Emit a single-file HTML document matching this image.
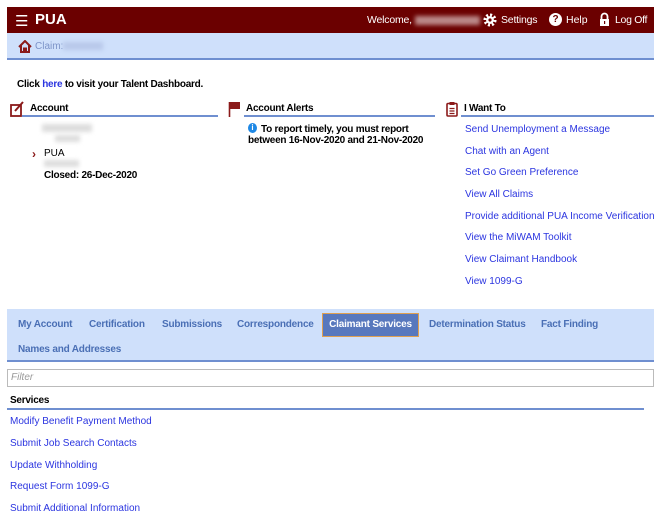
<!DOCTYPE html><html><head><style>
*{margin:0;padding:0;box-sizing:border-box}
body{width:662px;height:519px;background:#fff;font-family:"Liberation Sans",Arial,sans-serif;font-size:10px;color:#000;position:relative;overflow:hidden}
.a{position:absolute;white-space:nowrap}
.lk{color:#2b35e0}
.hdr{left:7px;top:7px;width:647px;height:26px;background:#6b0000;color:#fff}
.bc{left:7px;top:33px;width:647px;height:27px;background:#cfe0fb;border-bottom:2px solid #6f8fd0}
.h,b{font-weight:bold;letter-spacing:-0.25px}
.ul{height:2px;background:#6f8fd0}
.blur{background:#ddd;filter:blur(2px)}
.tabs{left:7px;top:309px;width:647px;height:53px;background:#cfe0fb;border-bottom:2px solid #6f8fd0}
.tab{color:#4a6fb5;font-weight:bold;letter-spacing:-0.2px}
</style></head><body>
<div class="a hdr">
 <div class="a" style="left:8px;top:5px;font-size:15px">&#9776;</div>
 <div class="a" style="left:28px;top:4px;font-size:15px;font-weight:bold">PUA</div>
 <div class="a" style="left:360px;top:7px;font-size:10.5px;letter-spacing:-0.2px">Welcome,</div>
 <div class="a blur" style="left:408px;top:9px;width:65px;height:9px;background:#b88"></div>
 <svg class="a" style="left:476px;top:6px" width="14" height="14" viewBox="0 0 16 16"><circle cx="8" cy="8" r="5.5" fill="none" stroke="#fff" stroke-width="4" stroke-dasharray="2.2 2.1"/><circle cx="8" cy="8" r="4.5" fill="#fff"/><circle cx="8" cy="8" r="1.8" fill="#6b0000"/></svg>
 <div class="a" style="left:494px;top:7px;font-size:10.5px;letter-spacing:-0.2px">Settings</div>
 <div class="a" style="left:542px;top:6px;width:13px;height:13px;border-radius:50%;background:#fff;color:#6b0000;font-weight:bold;font-size:10px;text-align:center;line-height:13px">?</div>
 <div class="a" style="left:559px;top:7px;font-size:10.5px">Help</div>
 <svg class="a" style="left:592px;top:5px" width="11" height="15" viewBox="0 0 11 15"><path d="M2.5 7V4.5a3 3 0 0 1 6 0V7" fill="none" stroke="#fff" stroke-width="1.8"/><rect x="1" y="7" width="9" height="7" fill="#fff"/><rect x="5" y="9" width="1.2" height="3" fill="#6b0000"/></svg>
 <div class="a" style="left:608px;top:7px;font-size:10.5px;letter-spacing:-0.3px">Log Off</div>
</div>
<div class="a bc">
 <svg class="a" style="left:11px;top:7px" width="14" height="13" viewBox="0 0 14 13"><path d="M1 7L7 1l6 6M3 5.5V12h3V8.5h2V12h3V5.5" fill="none" stroke="#8b1a1a" stroke-width="2"/></svg>
 <div class="a" style="left:28px;top:8px;color:#7d93c8">Claim:</div>
 <div class="a blur" style="left:56px;top:9px;width:40px;height:8px;background:#b8c8ea"></div>
</div>
<div class="a" style="left:17px;top:79px"><b>Click <span class="lk">here</span> to visit your Talent Dashboard.</b></div>

<svg class="a" style="left:10px;top:101px" width="15" height="16" viewBox="0 0 15 16"><rect x="1" y="4" width="10" height="11" fill="none" stroke="#8b1a1a" stroke-width="1.8"/><path d="M5 10L13 1" stroke="#8b1a1a" stroke-width="2"/></svg>
<div class="a h" style="left:30px;top:103px">Account</div>
<div class="a ul" style="left:22px;top:115px;width:196px"></div>
<div class="a blur" style="left:42px;top:124px;width:50px;height:8px"></div>
<div class="a blur" style="left:55px;top:135px;width:25px;height:7px"></div>
<div class="a" style="left:32px;top:147px;color:#8b1a1a;font-weight:bold;font-size:12px">›</div>
<div class="a" style="left:44px;top:148px">PUA</div>
<div class="a blur" style="left:44px;top:160px;width:35px;height:7px"></div>
<div class="a h" style="left:44px;top:170px">Closed: 26-Dec-2020</div>

<svg class="a" style="left:228px;top:101px" width="14" height="16" viewBox="0 0 14 16"><path d="M1.5 1v15" stroke="#8b1a1a" stroke-width="1.6"/><path d="M2 1h10v7H2z" fill="#8b1a1a"/></svg>
<div class="a h" style="left:246px;top:103px">Account Alerts</div>
<div class="a ul" style="left:244px;top:115px;width:191px"></div>
<div class="a" style="left:248px;top:123px;width:9px;height:10px;border-radius:50%;background:#1e88e5;color:#fff;font-size:8px;font-weight:bold;text-align:center;line-height:10px">i</div>
<div class="a h" style="left:261px;top:124px">To report timely, you must report</div>
<div class="a h" style="left:248px;top:135px">between 16-Nov-2020 and 21-Nov-2020</div>

<svg class="a" style="left:446px;top:101px" width="12" height="16" viewBox="0 0 12 16"><rect x="1" y="2.5" width="10" height="12.5" rx="1" fill="none" stroke="#8b1a1a" stroke-width="1.6"/><rect x="3.5" y="1" width="5" height="3" fill="#8b1a1a"/><path d="M3.5 7.5h5M3.5 10h5M3.5 12.5h5" stroke="#8b1a1a" stroke-width="1.2"/></svg>
<div class="a h" style="left:464px;top:103px">I Want To</div>
<div class="a ul" style="left:461px;top:115px;width:193px"></div>
<div class="a lk" style="left:465px;top:124px">Send Unemployment a Message</div>
<div class="a lk" style="left:465px;top:146px">Chat with an Agent</div>
<div class="a lk" style="left:465px;top:167px">Set Go Green Preference</div>
<div class="a lk" style="left:465px;top:189px">View All Claims</div>
<div class="a lk" style="left:465px;top:211px">Provide additional PUA Income Verification</div>
<div class="a lk" style="left:465px;top:232px">View the MiWAM Toolkit</div>
<div class="a lk" style="left:465px;top:254px">View Claimant Handbook</div>
<div class="a lk" style="left:465px;top:276px">View 1099-G</div>

<div class="a tabs">
 <div class="a tab" style="left:11px;top:10px">My Account</div>
 <div class="a tab" style="left:82px;top:10px">Certification</div>
 <div class="a tab" style="left:155px;top:10px">Submissions</div>
 <div class="a tab" style="left:230px;top:10px">Correspondence</div>
 <div class="a" style="left:315px;top:4px;width:97px;height:24px;background:#5878bd;border:1px solid #e0a050;color:#fff;font-weight:bold;letter-spacing:-0.2px;text-align:center;line-height:21px">Claimant Services</div>
 <div class="a tab" style="left:422px;top:10px">Determination Status</div>
 <div class="a tab" style="left:534px;top:10px">Fact Finding</div>
 <div class="a tab" style="left:11px;top:35px">Names and Addresses</div>
</div>
<div class="a" style="left:7px;top:369px;width:647px;height:18px;border:1px solid #bbb"><span class="a" style="left:3px;top:2px;color:#999;font-style:italic;font-size:10px">Filter</span></div>
<div class="a h" style="left:10px;top:395px">Services</div>
<div class="a ul" style="left:7px;top:408px;width:637px"></div>
<div class="a lk" style="left:10px;top:416px">Modify Benefit Payment Method</div>
<div class="a lk" style="left:10px;top:438px">Submit Job Search Contacts</div>
<div class="a lk" style="left:10px;top:460px">Update Withholding</div>
<div class="a lk" style="left:10px;top:481px">Request Form 1099-G</div>
<div class="a lk" style="left:10px;top:503px">Submit Additional Information</div>
</body></html>
